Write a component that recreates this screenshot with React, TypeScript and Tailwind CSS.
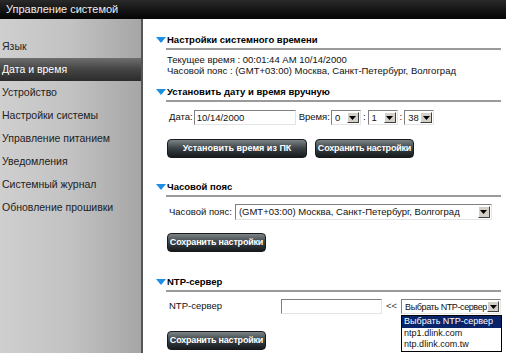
import React from 'react'

const menu = [
  'Язык',
  'Дата и время',
  'Устройство',
  'Настройки системы',
  'Управление питанием',
  'Уведомления',
  'Системный журнал',
  'Обновление прошивки',
]

function Arrow() {
  return (
    <div className="flex w-[12px] shrink-0 items-center justify-center border border-t-white border-l-white border-b-[#404040] border-r-[#404040] bg-[#d4d0c8]">
      <svg width="7" height="4" viewBox="0 0 7 4">
        <path d="M0 0h7L3.5 4z" fill="#000" />
      </svg>
    </div>
  )
}

function Select({ value, className }: { value: string; className: string }) {
  return (
    <div className={`flex border border-t-[#808080] border-l-[#808080] border-b-[#e4e4e4] border-r-[#e4e4e4] bg-white p-px ${className}`}>
      <span className="min-w-0 flex-1 overflow-hidden whitespace-nowrap pl-[2px] leading-[12px]">{value}</span>
      <Arrow />
    </div>
  )
}

function Button({ children, className = '' }: { children: React.ReactNode; className?: string }) {
  return (
    <div
      className={`flex h-[19px] items-center justify-center whitespace-nowrap rounded-[4px] border border-[#1a1a1a] bg-gradient-to-b from-[#7c8488] via-[#3a4246] to-[#151a1d] text-[9px] font-bold text-white ${className}`}
    >
      {children}
    </div>
  )
}

function Heading({ title, className = '' }: { title: string; className?: string }) {
  return (
    <div className={className}>
      <div className="flex h-[14px] items-center">
        <svg width="10" height="6" viewBox="0 0 10 6" className="mr-[1px] shrink-0">
          <path d="M0 0h10L5 6z" fill="#1c8ee6" />
        </svg>
        <span className="text-[9.5px] font-bold leading-[14px] text-black">{title}</span>
      </div>
      <div className="ml-[10px] mt-[1px] h-[2px] bg-[#9a9a9a]" />
    </div>
  )
}

export default function App() {
  return (
    <div className="flex h-[353px] w-[506px] flex-col overflow-hidden bg-white font-['Liberation_Sans',sans-serif] text-[9.5px] text-[#111]">
      <div className="flex h-[19px] shrink-0 items-center bg-gradient-to-b from-[#2a2a2a] to-[#050505] pl-[6px] text-[11px] text-[#eee]">
        Управление системой
      </div>
      <div className="flex flex-1">
        {/* sidebar */}
        <div className="w-[143px] shrink-0 border-r-2 border-[#555] bg-gradient-to-r from-[#cfcfcf] via-[#c2c2c2] to-[#a6a6a6] pt-[16px]">
          {menu.map((m) => (
            <div
              key={m}
              className={`flex h-[23px] items-center pl-[2px] text-[10.5px] ${
                m === 'Дата и время'
                  ? 'bg-gradient-to-b from-[#6e6e6e] via-[#444] to-[#2c2c2c] text-white'
                  : 'text-[#222]'
              }`}
            >
              {m}
            </div>
          ))}
        </div>

        {/* content */}
        <div className="flex-1 pl-[13px] pr-[6px]">
          <Heading title="Настройки системного времени" className="mt-[14px]" />
          <div className="mt-[4px] pl-[11px] leading-[11px]">
            <div>Текущее время : 00:01:44 AM 10/14/2000</div>
            <div>Часовой пояс : (GMT+03:00) Москва, Санкт-Петербург, Волгоград</div>
          </div>

          <Heading title="Установить дату и время вручную" className="mt-[9px]" />
          <div className="mt-[8px] flex h-[15px] items-center pl-[13px]">
            <span>Дата:</span>
            <div className="ml-[1px] h-[15px] w-[102px] border border-t-[#808080] border-l-[#808080] border-b-[#e4e4e4] border-r-[#e4e4e4] pl-[2px] leading-[13px]">
              10/14/2000
            </div>
            <span className="ml-[3px]">Время:</span>
            <Select value="0" className="ml-[1px] h-[15px] w-[30px]" />
            <span className="mx-[2px]">:</span>
            <Select value="1" className="h-[15px] w-[30px]" />
            <span className="mx-[2px]">:</span>
            <Select value="38" className="h-[15px] w-[30px]" />
          </div>
          <div className="mt-[14px] flex gap-[8px] pl-[11px]">
            <Button className="w-[140px]">Установить время из ПК</Button>
            <Button className="w-[99px] tracking-[-0.2px]">Сохранить настройки</Button>
          </div>

          <Heading title="Часовой пояс" className="mt-[22px]" />
          <div className="mt-[7px] flex h-[16px] items-center pl-[13px]">
            <span>Часовой пояс:</span>
            <Select value="(GMT+03:00) Москва, Санкт-Петербург, Волгоград" className="ml-[3px] h-[16px] w-[257px]" />
          </div>
          <div className="mt-[13px] flex pl-[11px]">
            <Button className="w-[99px] tracking-[-0.2px]">Сохранить настройки</Button>
          </div>

          <Heading title="NTP-сервер" className="mt-[23px]" />
          <div className="mt-[7px] flex h-[15px] items-center pl-[13px]">
            <span className="w-[112px]">NTP-сервер</span>
            <div className="h-[15px] w-[101px] border border-t-[#808080] border-l-[#808080] border-b-[#e4e4e4] border-r-[#e4e4e4]" />
            <span className="ml-[4px] mr-[4px] text-[#444]">&lt;&lt;</span>
            <div className="relative text-[9px]">
              <Select value="Выбрать NTP-сервер" className="h-[15px] w-[100px] tracking-[-0.4px]" />
              <div className="absolute left-0 top-[16px] z-10 w-[101px] border border-black bg-white leading-[11.5px]">
                <div className="bg-[#0a246a] pl-[2px] text-white">Выбрать NTP-сервер</div>
                <div className="pl-[2px]">ntp1.dlink.com</div>
                <div className="pl-[2px]">ntp.dlink.com.tw</div>
              </div>
            </div>
          </div>
          <div className="mt-[17px] flex pl-[11px]">
            <Button className="w-[99px] tracking-[-0.2px]">Сохранить настройки</Button>
          </div>
        </div>
      </div>
    </div>
  )
}
